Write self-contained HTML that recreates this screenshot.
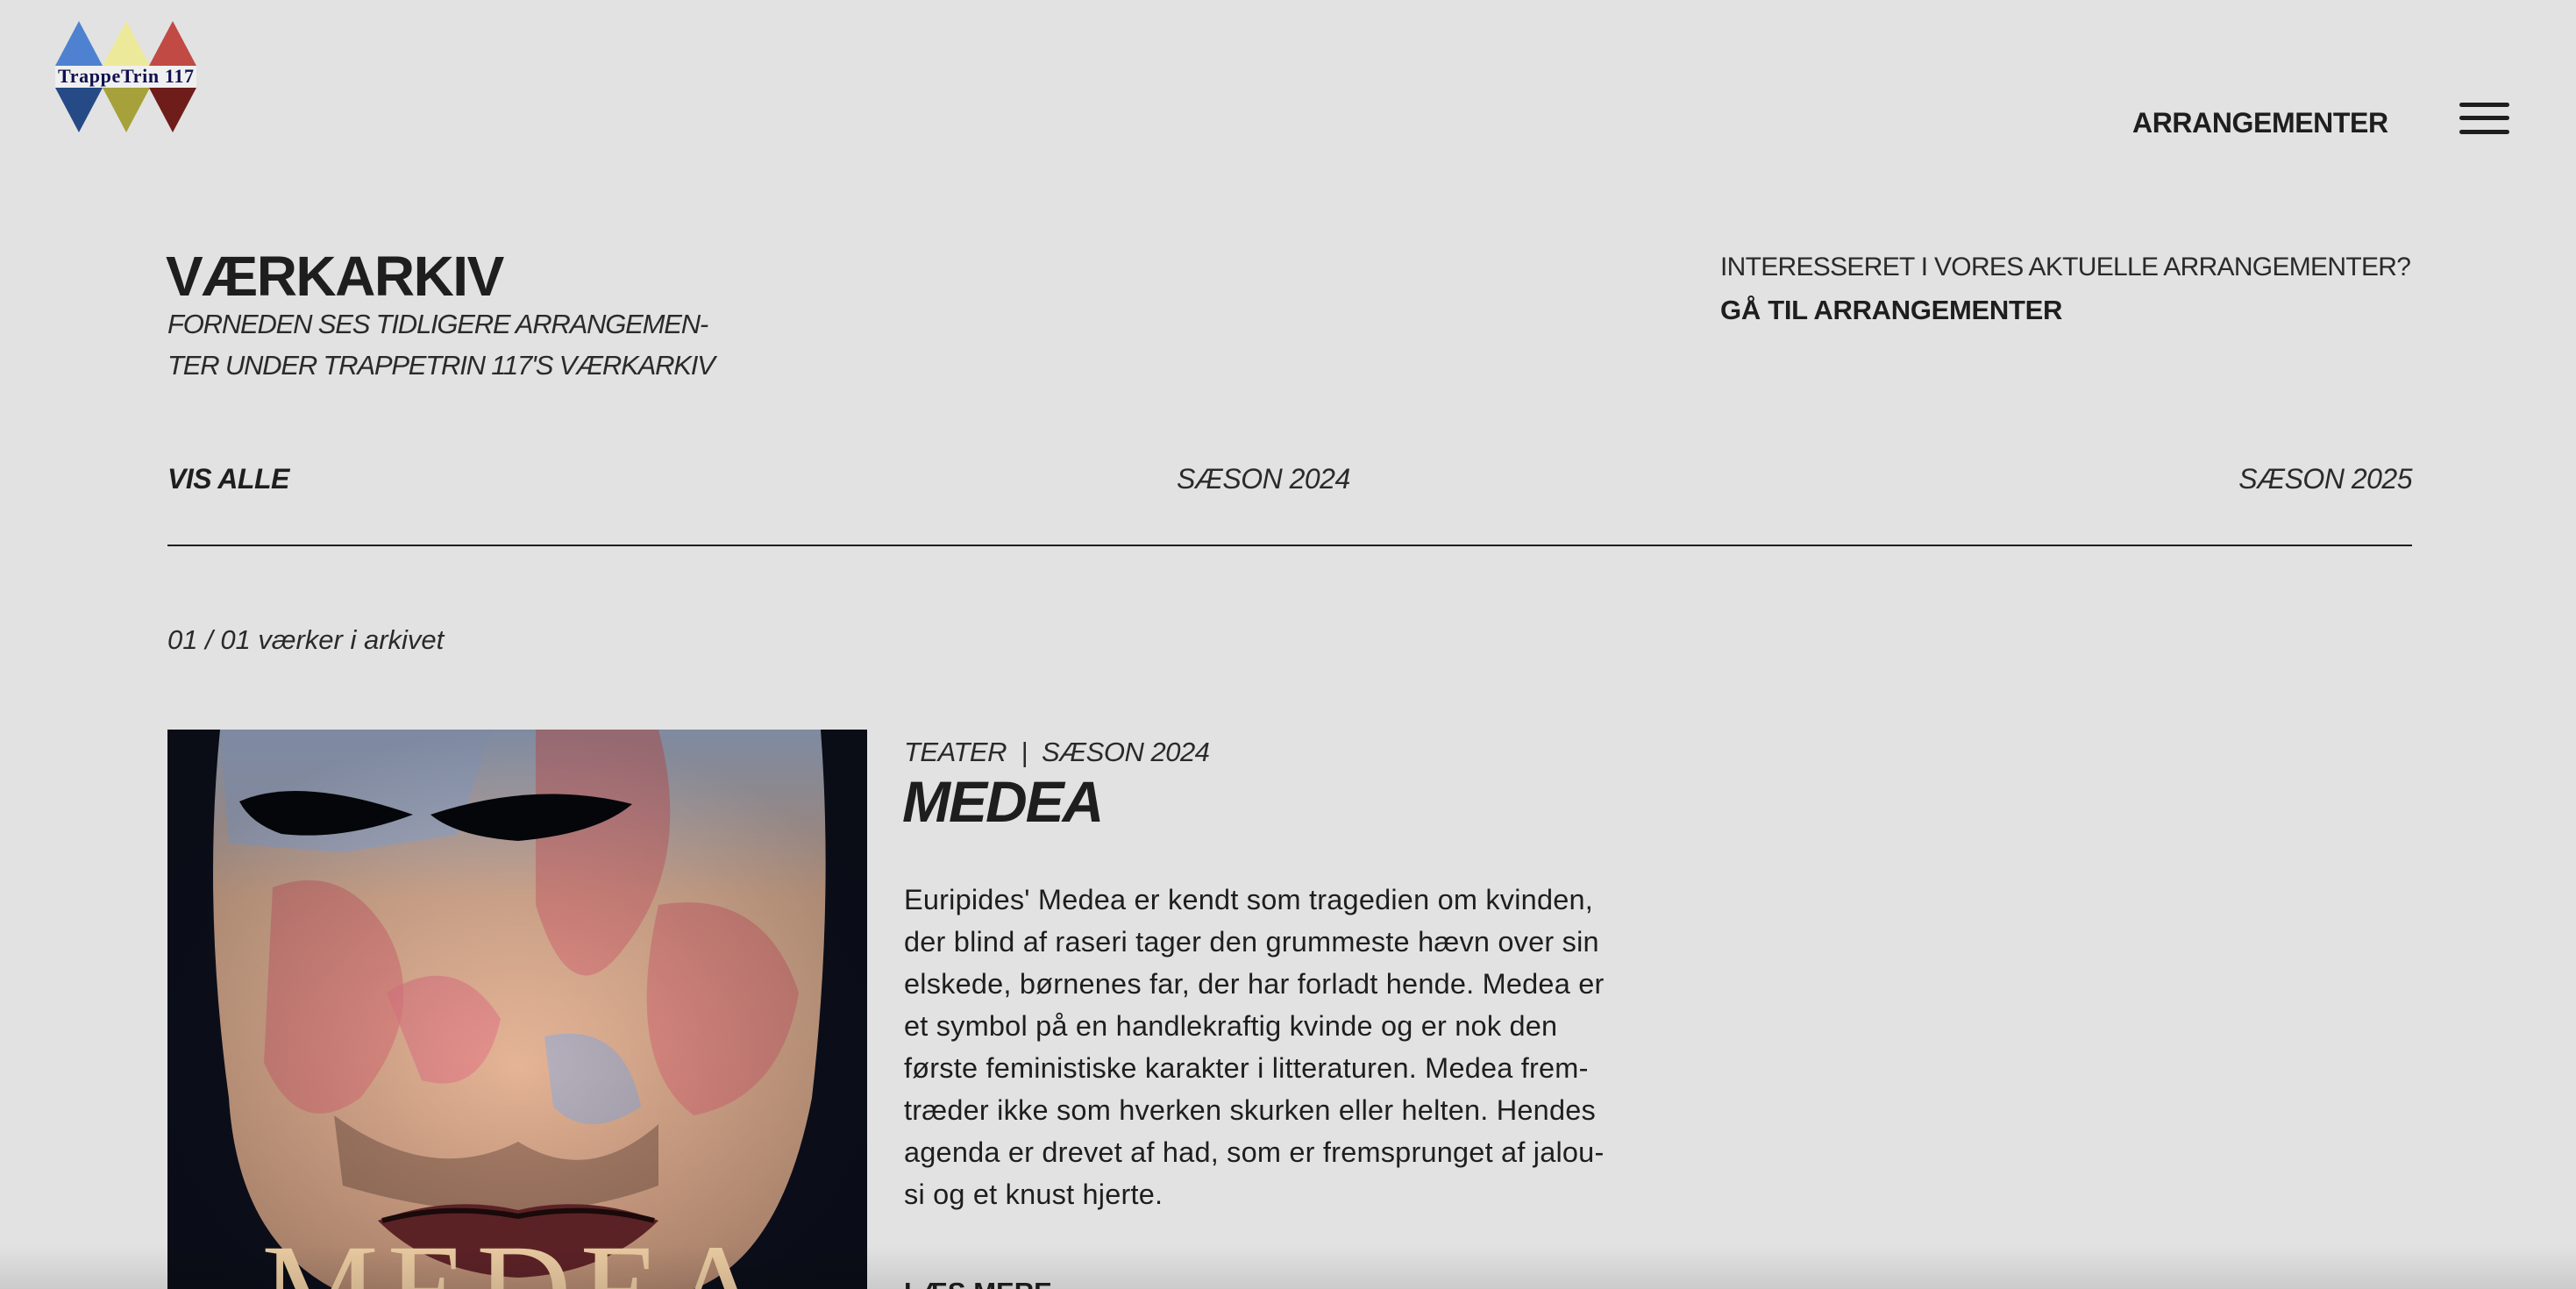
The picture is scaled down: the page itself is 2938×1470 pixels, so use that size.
<!DOCTYPE html>
<html style="width:2938px;height:1470px;overflow:hidden"><head><meta charset="utf-8"><style>
html,body{margin:0;padding:0}
body{width:2938px;height:1470px;background:#e2e2e2;position:relative;overflow:hidden;font-family:"Liberation Sans",sans-serif;color:#1e1e1e}
.a{position:absolute;white-space:nowrap;line-height:1}
</style></head><body>
<svg class="a" style="left:60px;top:20px" width="170" height="140" viewBox="60 20 170 140">
<polygon points="90,24 117,75 63,75" fill="#4e82d0"/>
<polygon points="144,24 171,75 117,75" fill="#ede99a"/>
<polygon points="197,24 224,75 170,75" fill="#c14a44"/>
<polygon points="63,100 117,100 90,151" fill="#254a85"/>
<polygon points="117,100 171,100 144,151" fill="#a6a13a"/>
<polygon points="170,100 224,100 197,151" fill="#6e1d1a"/>
<rect x="63" y="75" width="161" height="25" fill="#f0f0f0"/>
<text x="143.5" y="94" text-anchor="middle" font-family="Liberation Serif" font-weight="bold" font-size="22" fill="#101050" textLength="155">TrappeTrin 117</text>
</svg>
<div class="a" style="left:2432px;top:124px;font-size:32px;font-weight:bold;letter-spacing:-0.4px">ARRANGEMENTER</div>
<div class="a" style="left:2805px;top:117px;width:57px;height:5px;background:#1e1e1e;border-radius:3px"></div>
<div class="a" style="left:2805px;top:132px;width:57px;height:5px;background:#1e1e1e;border-radius:3px"></div>
<div class="a" style="left:2805px;top:148px;width:57px;height:5px;background:#1e1e1e;border-radius:3px"></div>

<div class="a" style="left:189px;top:283px;font-size:64px;font-weight:bold;letter-spacing:-1.5px">VÆRKARKIV</div>
<div class="a" style="left:191px;top:346px;font-size:31px;line-height:47px;font-style:italic;color:#2a2a2a;letter-spacing:-1.2px">FORNEDEN SES TIDLIGERE ARRANGEMEN-<br>TER UNDER TRAPPETRIN 117'S VÆRKARKIV</div>

<div class="a" style="left:1962px;top:290px;font-size:30px;color:#2a2a2a;letter-spacing:-0.7px">INTERESSERET I VORES AKTUELLE ARRANGEMENTER?</div>
<div class="a" style="left:1962px;top:338px;font-size:31px;font-weight:bold;letter-spacing:-0.3px">GÅ TIL ARRANGEMENTER</div>

<div class="a" style="left:191px;top:530px;font-size:32px;font-weight:bold;font-style:italic;letter-spacing:-0.5px">VIS ALLE</div>
<div class="a" style="left:1342px;top:530px;font-size:32px;font-style:italic;color:#2a2a2a;letter-spacing:-0.5px">SÆSON 2024</div>
<div class="a" style="right:187px;top:530px;font-size:32px;font-style:italic;color:#2a2a2a;letter-spacing:-0.5px">SÆSON 2025</div>
<div class="a" style="left:191px;top:621px;width:2560px;height:2px;background:#1e1e1e"></div>

<div class="a" style="left:191px;top:714px;font-size:31px;font-style:italic;color:#2a2a2a">01 / 01 værker i arkivet</div>

<svg class="a" style="left:191px;top:832px" width="798" height="638" viewBox="0 0 798 638">
<defs>
<linearGradient id="f" x1="0" y1="0" x2="0" y2="1"><stop offset="0" stop-color="#b4c6e6"/><stop offset="0.3" stop-color="#ecbc9e"/><stop offset="1" stop-color="#dca88a"/></linearGradient>
<radialGradient id="s" cx="0.5" cy="0.6" r="0.6"><stop offset="0" stop-color="#000" stop-opacity="0"/><stop offset="1" stop-color="#000" stop-opacity="0.3"/></radialGradient>
</defs>
<rect width="798" height="638" fill="#0e1220"/>
<path d="M60,0 L745,0 Q760,200 735,420 Q700,600 600,638 L190,638 Q80,580 70,420 Q40,200 60,0Z" fill="url(#f)"/>
<path d="M60,0 L370,0 L330,120 L200,140 L70,130Z" fill="#b4c4e6" opacity="0.8"/>
<path d="M120,180 Q200,150 250,230 Q300,320 220,420 Q150,470 110,380Z" fill="#e57c80" opacity="0.65"/>
<path d="M420,0 L560,0 Q600,150 520,250 Q460,330 420,200Z" fill="#e57c80" opacity="0.65"/>
<path d="M560,200 Q680,180 720,300 Q700,420 600,440 Q520,380 560,200Z" fill="#e57c80" opacity="0.65"/>
<path d="M250,300 Q330,250 380,330 Q360,420 290,400Z" fill="#e8808a" opacity="0.65"/>
<path d="M430,350 Q520,330 540,430 Q480,470 440,430Z" fill="#9ab0dc" opacity="0.6"/>
<path d="M190,440 Q300,520 400,470 Q480,520 560,450 L560,520 Q400,580 200,520Z" fill="#5a3a30" opacity="0.4"/>
<rect width="798" height="638" fill="url(#s)"/>
<path d="M82,82 Q150,52 280,97 Q200,127 130,119 Q95,107 82,82Z" fill="#05060a"/>
<path d="M300,97 Q420,57 530,85 Q490,119 400,127 Q330,122 300,97Z" fill="#05060a"/>
<path d="M240,560 Q320,530 400,548 Q480,530 560,560 Q500,620 400,625 Q300,620 240,560Z" fill="#5b2226"/>
<path d="M245,560 Q320,540 400,555 Q480,540 555,560" stroke="#1a0a0a" stroke-width="6" fill="none"/>
<text x="399" y="690" text-anchor="middle" font-family="Liberation Serif" font-size="150" fill="#e8c9a0" letter-spacing="10">MEDEA</text>
</svg>

<div class="a" style="left:1031px;top:842px;font-size:31px;font-style:italic;color:#2a2a2a;letter-spacing:-0.5px">TEATER &nbsp;| &nbsp;SÆSON 2024</div>
<div class="a" style="left:1029px;top:881px;font-size:66px;font-weight:bold;font-style:italic;letter-spacing:-2px">MEDEA</div>
<div class="a" style="left:1031px;top:1002px;font-size:32.5px;line-height:48px;color:#1e1e1e;letter-spacing:0.2px">Euripides' Medea er kendt som tragedien om kvinden,<br>der blind af raseri tager den grummeste hævn over sin<br>elskede, børnenes far, der har forladt hende. Medea er<br>et symbol på en handlekraftig kvinde og er nok den<br>første feministiske karakter i litteraturen. Medea frem-<br>træder ikke som hverken skurken eller helten. Hendes<br>agenda er drevet af had, som er fremsprunget af jalou-<br>si og et knust hjerte.</div>
<div class="a" style="left:1031px;top:1458px;height:12px;overflow:hidden"><div style="font-size:31px;font-weight:bold;line-height:1">LÆS MERE</div></div>
<div class="a" style="left:0;top:1420px;width:2938px;height:50px;background:linear-gradient(to bottom,rgba(0,0,0,0),rgba(0,0,0,0.1))"></div>
</body></html>
